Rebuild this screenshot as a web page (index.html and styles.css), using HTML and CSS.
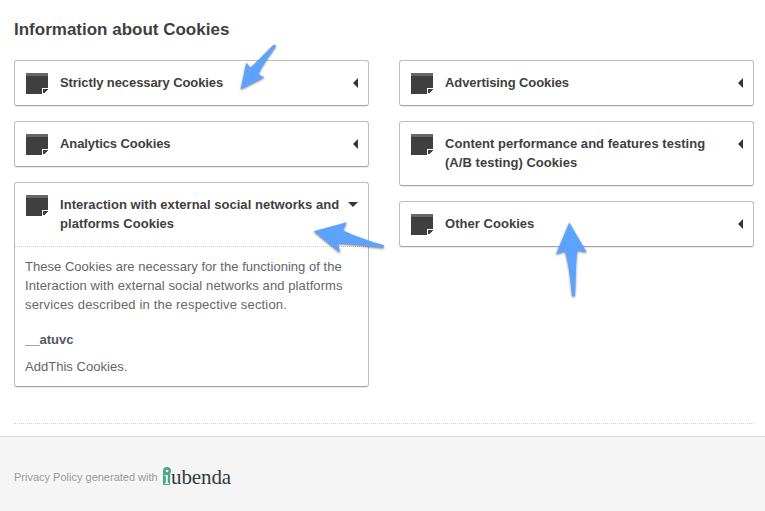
FILE: index.html
```html
<!doctype html>
<html lang="en">

<head>
  <meta charset="utf-8">
  <title>Information about Cookies</title>
  <link rel="stylesheet" href="styles.css">
</head>

<body>
  <svg class="defs" width="0" height="0">
    <symbol id="note" viewBox="0 0 22 21">
      <path fill="#3f3f3f" d="M0 0h22v15h-6v6H0z"/>
      <path fill="#666" d="M0 0h22v3H0z"/>
      <path fill="#3f3f3f" d="M17 16h5v1h-1v1h-1v1h-1v1h-2z"/>
    </symbol>
  </svg>

  <main class="policy">
    <h1>Information about Cookies</h1>

    <div class="columns">
      <div class="column">
        <section class="box">
          <h2 class="tight"><svg class="note"><use href="#note"/></svg><span>Strictly necessary Cookies</span><i class="caret"></i></h2>
        </section>
        <section class="box">
          <h2 class="tight"><svg class="note"><use href="#note"/></svg><span>Analytics Cookies</span><i class="caret"></i></h2>
        </section>
        <section class="box">
          <h2><svg class="note"><use href="#note"/></svg><span>Interaction with external social networks and<br>platforms Cookies</span><i class="caret open"></i></h2>
          <div class="details">
            <p><span class="snug">These Cookies are necessary for the functioning of the</span><br>Interaction with external social networks and platforms<br><span class="loose">services described in the respective section.</span></p>
            <h3>__atuvc</h3>
            <p class="snug">AddThis Cookies.</p>
          </div>
        </section>
      </div>

      <div class="column">
        <section class="box">
          <h2 class="tight"><svg class="note"><use href="#note"/></svg><span>Advertising Cookies</span><i class="caret"></i></h2>
        </section>
        <section class="box">
          <h2><svg class="note"><use href="#note"/></svg><span>Content performance and features testing<br>(A/B testing) Cookies</span><i class="caret"></i></h2>
        </section>
        <section class="box">
          <h2><svg class="note"><use href="#note"/></svg><span>Other Cookies</span><i class="caret"></i></h2>
        </section>
      </div>
    </div>
  </main>

  <footer>
    <span class="credit">Privacy Policy generated with</span>
    <a class="logo">
      <svg width="8" height="19" viewBox="0 0 8 19">
        <path fill="#4ba882" d="M4 0a4 4 0 0 1 4 4c0 1-.4 1.900-.9 2.500V18H0V6.500C0 6 0 5 0 4a4 4 0 0 1 4-4z"/>
        <circle cx="4" cy="4" r="1.300" fill="#f5f5f5"/>
        <path fill="#f5f5f5" d="M1.500 8h3.300v8H6v1H1.500v-1h1.300V9H1.500z"/>
      </svg>
      <span>ubenda</span>
    </a>
  </footer>

  <svg class="arrows" width="765" height="511" viewBox="0 0 765 511">
    <path d="M240.700 89.300L246.300 62.700L250.300 67.500C257 62 265 53 273 45.300Q275.500 43.800 276 46C270 55 262 65 258.500 74.300L264.300 77.300Z"/>
    <path d="M313.700 231.300L346.700 222.300L343 230.300C354 236 369 241 384 245.300L383.500 247.800C368 246.500 354 244 338 243.500L340 252.700Z"/>
    <path d="M569.300 222.500L586.700 252.300L577.300 250.500C575.500 263 576 280 574.900 295.500Q573.500 297.300 572 295.500C570.500 280 569 265 565 251.300L556 254.300Z"/>
  </svg>
</body>

</html>
```

FILE: styles.css
```css
* { box-sizing:border-box; }
body { margin:0; background-color:#fff; color:#3f3f3f; font-family:"Liberation Sans",Arial,sans-serif; font-size:13px; line-height:19px; }
h1, h2, h3, p { margin:0; }
h1 { font-size:17px; line-height:22px; margin-bottom:19px; }
.defs { display:block; }
.policy { margin:0 11px 0 14px; padding-top:19px; height:424px; border-bottom:1px dotted #d4d4d4; }
.columns { display:flex; gap:30px; }
.column { width:355px; display:flex; flex-direction:column; gap:15px; }
.box { border:1px solid #bdbdbd; border-bottom-color:#a3a3a3; border-radius:3px; box-shadow:0 1px 0 #ececec; }
h2 { display:flex; padding:12px 10px 13px 11px; font-size:13px; line-height:19px; white-space:nowrap; letter-spacing:.04px; }
h2 span { flex:1; }
.tight { letter-spacing:-.09px; }
.snug { letter-spacing:.03px; }
.loose { letter-spacing:.17px; }
.note { width:22px; height:21px; margin:0 12px -2px 0; }
.caret { border:5px solid transparent; border-left:0; border-right-color:#2f363e; height:10px; margin-top:5px; }
.open { border:5px solid transparent; border-bottom:0; border-top-color:#2f363e; height:5px; margin-top:7px; }
.details { border-top:1px dotted #ccc; padding:10px 10px 10px; color:#666; white-space:nowrap; letter-spacing:.1px; }
h3 { margin:16px 0 8px; font-size:13px; letter-spacing:0; color:#505b66; }
footer { margin-top:12px; height:75px; background-color:#f5f5f5; border-top:1px solid #dadada; display:flex; padding:30px 14px 0; }
.credit { color:#999; font-size:11px; line-height:20px; width:149px; white-space:nowrap; }
.logo { display:flex; color:#333b43; font-family:"Liberation Serif",serif; font-size:21px; line-height:21px; letter-spacing:-.1px; }
.arrows { position:absolute; top:0; left:0; fill:#5ba3ff; filter:drop-shadow(0 1px 1px rgba(0,0,0,.5)); pointer-events:none; }
```
